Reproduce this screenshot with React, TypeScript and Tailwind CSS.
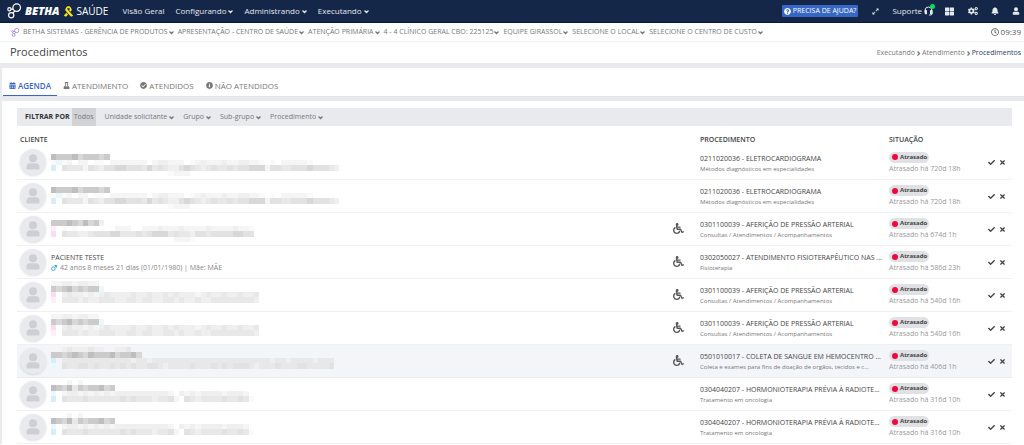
import React from "react";
import { FaCalendarAlt, FaFlask, FaCheckCircle, FaInfoCircle, FaQuestionCircle, FaBell, FaCogs, FaThLarge, FaExpandAlt, FaRegClock, FaWheelchair, FaCheck, FaTimes, FaRibbon } from "react-icons/fa";

type Mosaic = string[];

interface Row {
  name?: string;
  detail?: string;
  mosaic?: Mosaic;
  wheelchair?: boolean;
  active?: boolean;
  code: string;
  group: string;
  late: string;
}

const SHADES: Record<string, string> = {
  a: "#fafafa", b: "#f5f5f5", c: "#efefef", d: "#e8e8e8", e: "#e2e2e2", f: "#d8d8d8", g: "#cbcbcb", h: "#bebec1", t: "#d5eefa", p: "#fbdcf0", u: "#eaf7fd", q: "#fdeef8",
};

const LONG: Mosaic = [
  "",
  "hggghfgggfg",
  "auab.bb.aa.bbbbbbb.bccbbb.abcbbbcbbccbba.a.bbbbba",
  "t.edddbedceeffeeedfdedccefedcdeddedeefffbeeddeeefeeedc",
  "......................abbb",
];
const MID: Mosaic = [
  "",
  "ggghgfhfgc",
  "q.a.a.......bbb..bbbcbbbcbbbbcbbbbcbba",
  "p.eddccdeeeffdddedefffdeddceedeeeeffee",
  ".......................bbba",
];
const TALL: Mosaic = [
  "bbccbccbb",
  "gfghfgfggu",
  "p.cdccbcbcdccccdccdccdcdcccbcdccdccdccd",
  "q.dddcdccdddccddcddccddcdccdccddddddddc",
];
const WIDE: Mosaic = [
  "bbcdcccdcc..ccd",
  "ggfghgfhggghfgghf",
  "t.dddddddddddddcddcddddddddddddddddddddddcddcddddcddd",
  "u.eddeededdedededdeedcddddedddededeeedcdddedddeedddde",
];
const SHORT: Mosaic = [
  "...b.b",
  "hgfhdgfgghfg",
  "u.bccbcbcbcbccccccccccb.cbcbccccbcccb",
  "t.edddeddddddededddcddeb.edcddddeddeda",
];

const rows: Row[] = [
  { mosaic: LONG, code: "0211020036 - ELETROCARDIOGRAMA", group: "Métodos diagnósticos em especialidades", late: "720d 18h" },
  { mosaic: LONG, code: "0211020036 - ELETROCARDIOGRAMA", group: "Métodos diagnósticos em especialidades", late: "720d 18h" },
  { mosaic: MID, wheelchair: true, code: "0301100039 - AFERIÇÃO DE PRESSÃO ARTERIAL", group: "Consultas / Atendimentos / Acompanhamentos", late: "674d 1h" },
  { name: "PACIENTE TESTE", detail: "42 anos 8 meses 21 dias (01/01/1980) | Mãe: MÃE", wheelchair: true, code: "0302050027 - ATENDIMENTO FISIOTERAPÊUTICO NAS ...", group: "Fisioterapia", late: "586d 23h" },
  { mosaic: TALL, wheelchair: true, code: "0301100039 - AFERIÇÃO DE PRESSÃO ARTERIAL", group: "Consultas / Atendimentos / Acompanhamentos", late: "540d 16h" },
  { mosaic: TALL, wheelchair: true, code: "0301100039 - AFERIÇÃO DE PRESSÃO ARTERIAL", group: "Consultas / Atendimentos / Acompanhamentos", late: "540d 16h" },
  { mosaic: WIDE, wheelchair: true, active: true, code: "0501010017 - COLETA DE SANGUE EM HEMOCENTRO ...", group: "Coleta e exames para fins de doação de orgãos, tecidos e c...", late: "406d 1h" },
  { mosaic: SHORT, code: "0304040207 - HORMONIOTERAPIA PRÉVIA À RADIOTE...", group: "Tratamento em oncologia", late: "316d 10h" },
  { mosaic: SHORT, code: "0304040207 - HORMONIOTERAPIA PRÉVIA À RADIOTE...", group: "Tratamento em oncologia", late: "316d 10h" },
];

function MosaicArt({ cells }: { cells: Mosaic }) {
  return (
    <svg viewBox="0 0 168 15" className="block h-[27px] w-[299px]" preserveAspectRatio="none" shapeRendering="crispEdges" aria-hidden="true">
      {cells.map((line, y) =>
        line.split("").map((c, x) => (SHADES[c] ? <rect key={`${x}-${y}`} x={x * 3} y={y * 3} width={3} height={3} fill={SHADES[c]} /> : null))
      )}
    </svg>
  );
}

function Rings({ className }: { className: string }) {
  return (
    <svg viewBox="0 0 15 16" className={className} fill="none" stroke="currentColor" strokeWidth="1.2" aria-hidden="true">
      <circle cx="9.7" cy="4.6" r="3.8" />
      <circle cx="4.2" cy="12.3" r="2.6" />
      <circle cx="2.4" cy="6.3" r="1.6" />
      <path d="M4 6.2h2.1M7.8 8 5.8 10.2" />
    </svg>
  );
}

function Person({ className }: { className: string }) {
  return (
    <svg viewBox="0 0 14 16" className={className} fill="currentColor" aria-hidden="true">
      <circle cx="7" cy="4.3" r="4" />
      <path d="M.5 14.2v-1.500C.5 10.700 2 9.300 4 9.300h6c2 0 3.500 1.400 3.500 3.400v1.500c0 .8-.6 1.300-1.300 1.300H1.800c-.7 0-1.300-.5-1.300-1.300z" />
    </svg>
  );
}

function Headset() {
  return (
    <svg viewBox="0 0 18 20" className="h-[10px] w-[9px]" fill="none" stroke="currentColor" strokeWidth="2" aria-hidden="true">
      <path d="M2 11V9a7 7 0 0 1 14 0v6c0 2-1 3-3 3h-3" />
      <path d="M2 9h3v7H4c-1.300 0-2-.7-2-2zM13 9h3v7h-3z" fill="currentColor" />
    </svg>
  );
}

function Male() {
  return (
    <svg viewBox="0 0 12 12" className="size-[6px] text-[#35a9e0]" fill="none" stroke="currentColor" strokeWidth="2" aria-hidden="true">
      <circle cx="4.700" cy="7.300" r="3.600" />
      <path d="M7.300 4.700 11 1M7 1h4v4" />
    </svg>
  );
}

function Chevron({ turn = false }: { turn?: boolean }) {
  return (
    <svg viewBox="0 0 10 10" className="size-[5px]" fill="none" stroke="currentColor" strokeWidth="2.6" aria-hidden="true">
      <path d={turn ? "M3 1l4 4-4 4" : "M1 3l4 4 4-4"} />
    </svg>
  );
}

const menus = ["Configurando", "Administrando", "Executando"];
const contexts = ["BETHA SISTEMAS - GERÊNCIA DE PRODUTOS", "APRESENTAÇÃO - CENTRO DE SAÚDE", "ATENÇÃO PRIMÁRIA", "4 - 4 CLÍNICO GERAL CBO: 225125", "EQUIPE GIRASSOL", "SELECIONE O LOCAL", "SELECIONE O CENTRO DE CUSTO"];
const filters = ["Unidade solicitante", "Grupo", "Sub-grupo", "Procedimento"];
const tabs = [
  { label: "AGENDA", Icon: FaCalendarAlt },
  { label: "ATENDIMENTO", Icon: FaFlask },
  { label: "ATENDIDOS", Icon: FaCheckCircle },
  { label: "NÃO ATENDIDOS", Icon: FaInfoCircle },
];

export default function App() {
  return (
    <div className="min-h-[445px] bg-white font-['Open_Sans',sans-serif] text-[7px] text-[#777]">
      <header className="flex h-[23px] items-center border-b border-[#0a1638] bg-[#152748] pr-1 pl-[7px] text-[8px] text-[#e4e8ef]">
        <a href="#inicio" className="flex items-center text-white">
          <Rings className="h-4 w-[15px]" />
          <span className="ml-[3px] text-[11px] font-extrabold italic">BETHA</span>
          <FaRibbon className="mx-1 h-[11px] w-[9px] text-[#f6e31c]" />
          <span className="text-[10px]">SAÚDE</span>
        </a>
        <nav className="ml-[14px] flex items-center gap-[11px]">
          <a href="#geral">Visão Geral</a>
          {menus.map((m) => (
            <button key={m} className="flex items-center gap-[2px]">{m}<Chevron /></button>
          ))}
        </nav>
        <div className="ml-auto flex items-center">
          <button className="flex h-3 items-center gap-[2px] rounded-[1px] bg-[#3767c4] px-[2px] text-[7px] text-white"><FaQuestionCircle className="size-[7px]" />PRECISA DE AJUDA?</button>
          <button aria-label="Expandir" className="ml-[14px]"><FaExpandAlt className="size-[7px]" /></button>
          <button className="relative ml-[13px] flex items-center gap-[2px]">Suporte<Headset /><span className="absolute -top-px -right-[2px] size-[5px] rounded-full bg-[#00e05a]" /></button>
          <button aria-label="Aplicativos" className="ml-3"><FaThLarge className="size-[9px]" /></button>
          <button aria-label="Configurações" className="ml-[14px]"><FaCogs className="size-[10px]" /></button>
          <button aria-label="Notificações" className="ml-[13px]"><FaBell className="size-2" /></button>
          <button aria-label="Usuário" className="ml-[13px]"><Person className="size-2" /></button>
        </div>
      </header>
      <div className="flex h-[19px] items-center border-b border-[#f1f1f1] pr-[3px] pl-[11px]">
        <Rings className="mr-[3px] h-[9px] w-[9px] text-[#8a63c8]" />
        <div className="flex items-center gap-1">
          {contexts.map((c) => (
            <button key={c} className="flex items-center gap-px whitespace-nowrap">{c}<Chevron /></button>
          ))}
        </div>
        <span className="ml-auto flex items-center gap-[2px] text-[8px] text-[#555]"><FaRegClock className="size-2" />09:39</span>
      </div>
      <div className="flex h-[21px] items-center justify-between pr-[3px] pl-[10px]">
        <h1 className="text-[11px] text-[#444]">Procedimentos</h1>
        <nav aria-label="Trilha" className="flex items-center gap-px pt-[2px]">
          <a href="#executando">Executando</a><Chevron turn />
          <a href="#atendimento">Atendimento</a><Chevron turn />
          <a href="#procedimentos" className="text-[#263b66]">Procedimentos</a>
        </nav>
      </div>
      <div className="border-t-[5px] border-l-2 border-[#e9eaee]">
        <nav role="tablist" className="flex h-[29px] items-end border-b border-[#e3e4e8] pl-px text-[8px]">
          {tabs.map(({ label, Icon }, i) => (
            <button key={label} role="tab" aria-selected={i === 0} className={i === 0 ? "flex h-5 items-center gap-[2px] border-b border-[#3767c4] px-[6px] font-semibold text-[#3767c4]" : "flex h-5 items-center gap-[2px] border-b border-transparent px-[6px]"}>
              <Icon className="size-[7px]" />{label}
            </button>
          ))}
        </nav>
        <main className="border-t-4 border-[#e9eaee] pt-[7px] pr-3 pl-[15px]">
          <div className="flex h-[18px] items-center bg-[#e9eaee] pl-2">
            <span className="mr-[2px] font-bold text-[#333]">FILTRAR POR</span>
            <button className="h-full bg-[#d2d3d6] px-[2px]">Todos</button>
            <div className="ml-[9px] flex items-center gap-[9px]">
              {filters.map((f) => (
                <button key={f} className="flex items-center gap-[2px]">{f}<Chevron /></button>
              ))}
            </div>
          </div>
          <table className="w-full table-fixed border-collapse text-left">
            <thead>
              <tr className="h-5 text-[#444]">
                <th className="p-0 pt-2 pl-[3px] font-semibold">CLIENTE</th>
                <th aria-label="Acessibilidade" className="w-[27px]" />
                <th className="w-[189px] p-0 pt-2 font-semibold">PROCEDIMENTO</th>
                <th className="w-[99px] p-0 pt-2 font-semibold">SITUAÇÃO</th>
                <th aria-label="Ações" className="w-6" />
              </tr>
            </thead>
            <tbody>
              {rows.map((r, i) => (
                <tr key={i} className={r.active ? "h-[33px] border-b border-[#ececee] bg-[#f3f5f9]" : "h-[33px] border-b border-[#f0f0f0]"}>
                  <td className="p-0">
                    <div className="flex items-center pl-[3px]">
                      <span className="mr-[5px] flex size-[26px] shrink-0 items-center justify-center rounded-full bg-[#e9eaee] text-[#cdcfd2] shadow-sm"><Person className="h-4 w-[14px]" /></span>
                      {r.mosaic ? <MosaicArt cells={r.mosaic} /> : (
                        <div className="pt-[2px]">
                          <div className="leading-[10px] text-[#444]">{r.name}</div>
                          <div className="flex items-center gap-[3px] leading-[10px] text-[#888]"><Male />{r.detail}</div>
                        </div>
                      )}
                    </div>
                  </td>
                  <td className="p-0">{r.wheelchair && <FaWheelchair className="size-[11px] text-[#555]" />}</td>
                  <td className="p-0 pt-[3px] pr-1">
                    <div className="truncate leading-[10px] text-[#444]">{r.code}</div>
                    <div className="truncate text-[6px] leading-[10px] text-[#777]">{r.group}</div>
                  </td>
                  <td className="p-0 pt-px">
                    <span className="flex h-[11px] w-10 items-center gap-[2px] rounded-full bg-[#e0e1e5] px-[3px] text-[6px] font-bold text-[#444]"><span className="size-[6px] shrink-0 rounded-full bg-[#f0083c]" />Atrasado</span>
                    <div className="leading-[11px] text-[#999]">Atrasado há {r.late}</div>
                  </td>
                  <td className="p-0 pt-px">
                    <div className="flex gap-1 text-[#444]">
                      <button aria-label="Confirmar"><FaCheck className="size-[7px]" /></button>
                      <button aria-label="Cancelar"><FaTimes className="size-[7px]" /></button>
                    </div>
                  </td>
                </tr>
              ))}
            </tbody>
          </table>
        </main>
      </div>
    </div>
  );
}
